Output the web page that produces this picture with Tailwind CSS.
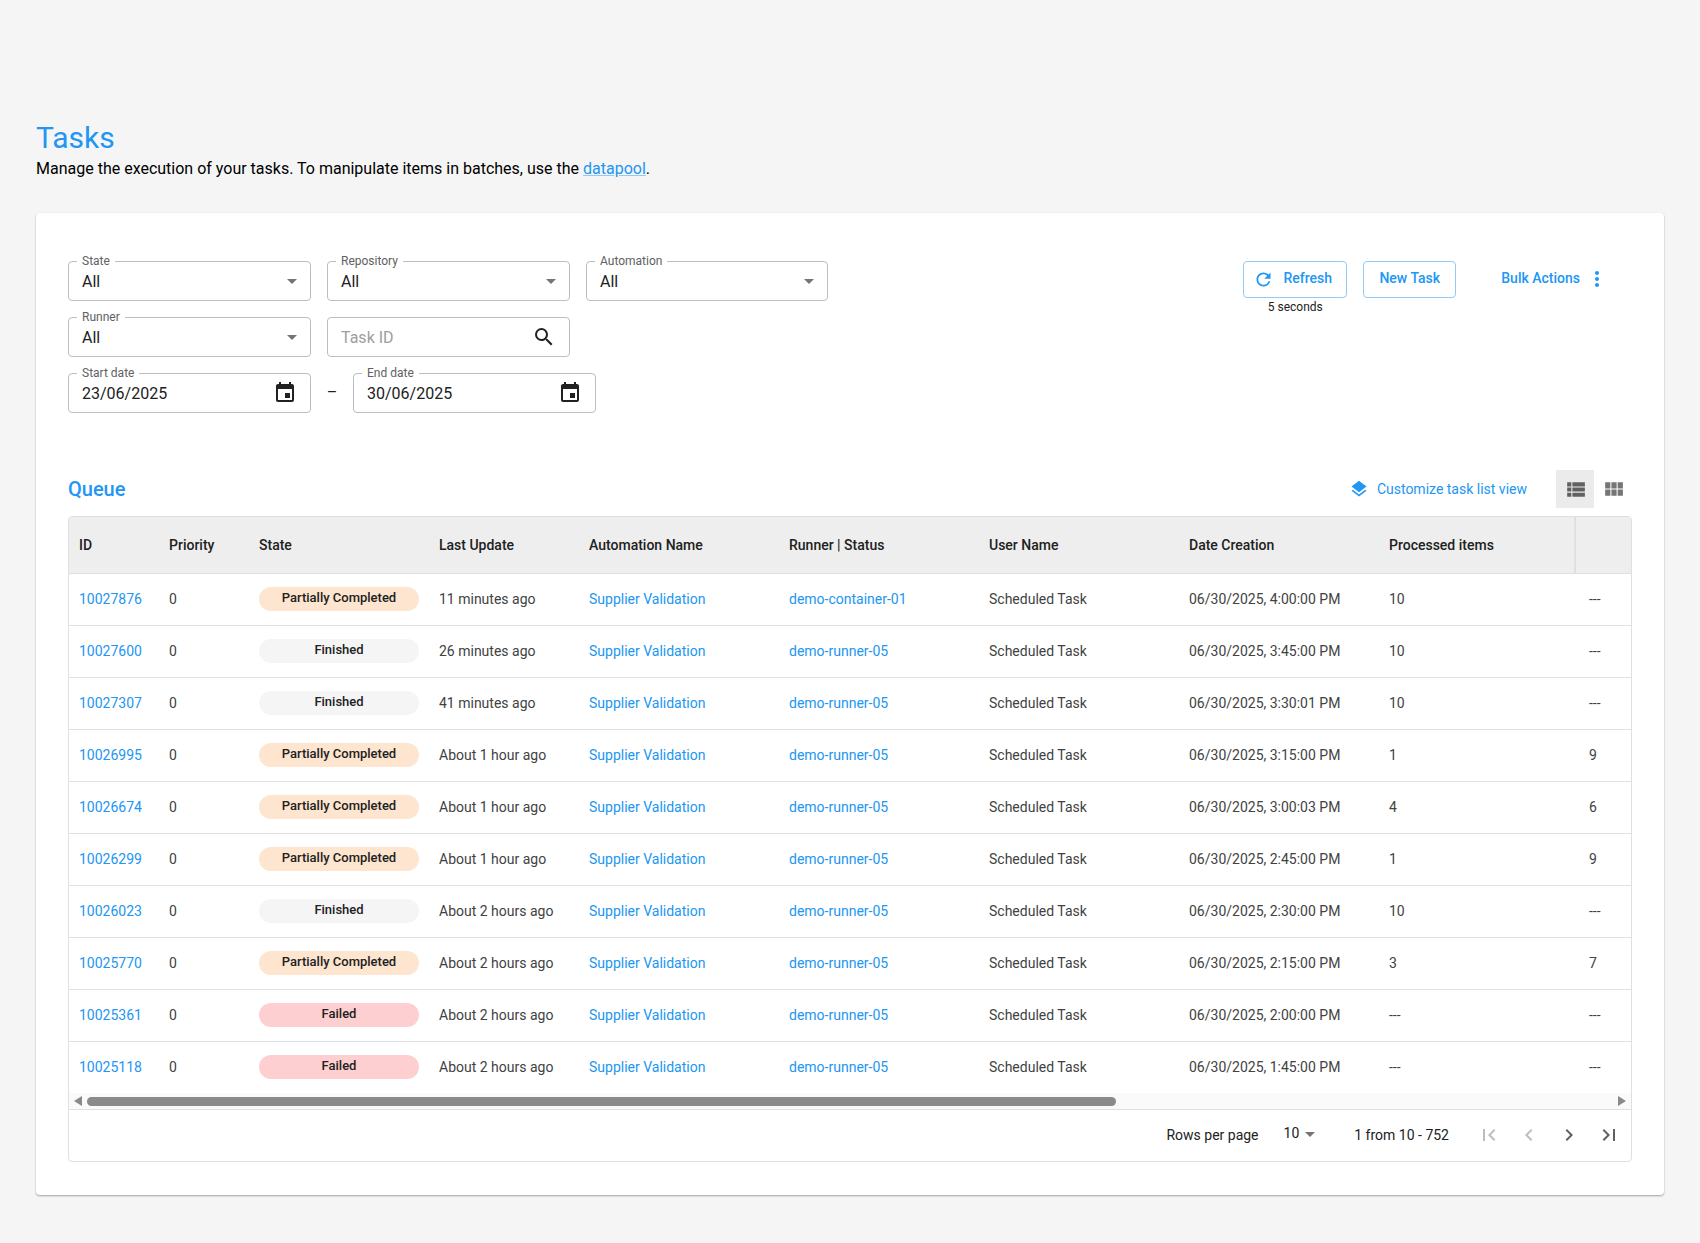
<!DOCTYPE html>
<html lang="en">
<head>
    <meta charset="UTF-8">
    <meta name="viewport" content="width=device-width, initial-scale=1.0">
    <script src="https://cdn.jsdelivr.net/npm/@tailwindcss/browser@4"></script>
    <title>Tasks</title>
</head>

<body class="bg-[#f5f5f5] font-['Roboto',sans-serif] h-[1243px] overflow-hidden">
    <main class="px-[36px] pt-[119px]">
        <h1 class="text-[30px] leading-[38px] font-normal text-[#2196f3]">Tasks</h1>
        <p class="text-base leading-[24px] text-black">Manage the execution of your tasks. To manipulate items in batches, use the <a href="#" class="text-[#2196f3] underline decoration-[#90caf9]">datapool</a>.</p>

        <section class="mt-[32px] h-[982px] bg-white rounded-[4px] shadow-[0_1px_2px_rgba(0,0,0,0.35)] px-[32px] pt-[48px]">
            <!-- filters -->
            <div class="flex justify-between h-[152px]">
                <div class="flex flex-col gap-[16px]">
                    <div class="flex gap-[16px]">
                        <div class="relative w-[243px] h-[40px] border border-[#bdbdbd] rounded-[4px] flex items-center justify-between pl-[13px] pr-[13px]">
                            <span class="absolute -top-[8px] left-[8px] bg-white px-[5px] text-xs leading-[14px] text-[#616161]">State</span>
                            <span class="mt-[2px] text-base text-[#212121]">All</span>
                            <span class="w-0 h-0 border-x-[5px] border-x-transparent border-t-[5px] border-t-[#757575]"></span>
                        </div>
                        <div class="relative w-[243px] h-[40px] border border-[#bdbdbd] rounded-[4px] flex items-center justify-between pl-[13px] pr-[13px]">
                            <span class="absolute -top-[8px] left-[8px] bg-white px-[5px] text-xs leading-[14px] text-[#616161]">Repository</span>
                            <span class="mt-[2px] text-base text-[#212121]">All</span>
                            <span class="w-0 h-0 border-x-[5px] border-x-transparent border-t-[5px] border-t-[#757575]"></span>
                        </div>
                        <div class="relative w-[242px] h-[40px] border border-[#bdbdbd] rounded-[4px] flex items-center justify-between pl-[13px] pr-[13px]">
                            <span class="absolute -top-[8px] left-[8px] bg-white px-[5px] text-xs leading-[14px] text-[#616161]">Automation</span>
                            <span class="mt-[2px] text-base text-[#212121]">All</span>
                            <span class="w-0 h-0 border-x-[5px] border-x-transparent border-t-[5px] border-t-[#757575]"></span>
                        </div>
                    </div>
                    <div class="flex gap-[16px]">
                        <div class="relative w-[243px] h-[40px] border border-[#bdbdbd] rounded-[4px] flex items-center justify-between pl-[13px] pr-[13px]">
                            <span class="absolute -top-[8px] left-[8px] bg-white px-[5px] text-xs leading-[14px] text-[#616161]">Runner</span>
                            <span class="mt-[2px] text-base text-[#212121]">All</span>
                            <span class="w-0 h-0 border-x-[5px] border-x-transparent border-t-[5px] border-t-[#757575]"></span>
                        </div>
                        <div class="w-[243px] h-[40px] border border-[#bdbdbd] rounded-[4px] flex items-center justify-between pl-[13px] pr-[13px]">
                            <span class="mt-[2px] text-base text-[#9e9e9e]">Task ID</span>
                            <svg class="w-[24px] h-[24px]" viewBox="0 0 24 24" fill="#212121"><path d="M15.5 14h-.79l-.28-.27A6.47 6.47 0 0 0 16 9.5 6.5 6.5 0 1 0 9.5 16c1.61 0 3.09-.59 4.23-1.57l.27.28v.79l5 4.99L20.49 19l-4.99-5zm-6 0C7.01 14 5 11.99 5 9.5S7.01 5 9.5 5 14 7.01 14 9.5 11.99 14 9.5 14z"/></svg>
                        </div>
                    </div>
                    <div class="flex items-center">
                        <div class="relative w-[243px] h-[40px] border border-[#bdbdbd] rounded-[4px] flex items-center justify-between pl-[13px] pr-[13px]">
                            <span class="absolute -top-[8px] left-[8px] bg-white px-[5px] text-xs leading-[14px] text-[#616161]">Start date</span>
                            <span class="mt-[2px] text-base text-[#212121]">23/06/2025</span>
                            <svg class="w-[24px] h-[24px]" viewBox="0 0 24 24" fill="#212121"><path d="M17 12h-5v5h5v-5zM16 1v2H8V1H6v2H5c-1.11 0-1.99.9-1.99 2L3 19c0 1.1.89 2 2 2h14c1.1 0 2-.9 2-2V5c0-1.1-.9-2-2-2h-1V1h-2zm3 18H5V8h14v11z"/></svg>
                        </div>
                        <span class="w-[42px] text-center text-base text-[#212121]">–</span>
                        <div class="relative w-[243px] h-[40px] border border-[#bdbdbd] rounded-[4px] flex items-center justify-between pl-[13px] pr-[13px]">
                            <span class="absolute -top-[8px] left-[8px] bg-white px-[5px] text-xs leading-[14px] text-[#616161]">End date</span>
                            <span class="mt-[2px] text-base text-[#212121]">30/06/2025</span>
                            <svg class="w-[24px] h-[24px]" viewBox="0 0 24 24" fill="#212121"><path d="M17 12h-5v5h5v-5zM16 1v2H8V1H6v2H5c-1.11 0-1.99.9-1.99 2L3 19c0 1.1.89 2 2 2h14c1.1 0 2-.9 2-2V5c0-1.1-.9-2-2-2h-1V1h-2zm3 18H5V8h14v11z"/></svg>
                        </div>
                    </div>
                </div>
                <div class="flex items-start">
                    <div class="flex flex-col items-center">
                        <button class="w-[104px] h-[37px] border border-[#90caf9] rounded-[4px] flex items-center justify-center gap-[9px] pb-[3px] pr-[5px] text-sm font-medium text-[#2196f3]">
                            <svg class="w-[21px] h-[21px] mt-[3px]" viewBox="0 0 24 24" fill="#2196f3"><path d="M17.65 6.35A7.958 7.958 0 0 0 12 4c-4.42 0-7.99 3.58-7.99 8s3.57 8 7.99 8c3.73 0 6.84-2.55 7.73-6h-2.08A5.99 5.99 0 0 1 12 18c-3.31 0-6-2.69-6-6s2.69-6 6-6c1.66 0 3.14.69 4.22 1.78L13 11h7V4l-2.35 2.35z"/></svg>
                            Refresh
                        </button>
                        <span class="text-xs leading-[18px] text-[#212121]">5 seconds</span>
                    </div>
                    <button class="ml-[16px] w-[93px] h-[37px] border border-[#90caf9] rounded-[4px] pb-[3px] text-sm font-medium text-[#2196f3]">New Task</button>
                    <div class="ml-[45px] h-[37px] flex items-center pb-[3px] text-sm font-medium text-[#2196f3]">
                        Bulk Actions
                        <svg class="ml-[5px] mr-[23px] w-[24px] h-[24px] mt-[2px]" viewBox="0 0 24 24" fill="#2196f3"><path d="M12 8c1.1 0 2-.9 2-2s-.9-2-2-2-2 .9-2 2 .9 2 2 2zm0 2c-1.1 0-2 .9-2 2s.9 2 2 2 2-.9 2-2-.9-2-2-2zm0 6c-1.1 0-2 .9-2 2s.9 2 2 2 2-.9 2-2-.9-2-2-2z"/></svg>
                    </div>
                </div>
            </div>

            <!-- queue header -->
            <div class="mt-[57px] mb-[8px] h-[38px] flex items-center justify-between">
                <h2 class="text-xl font-medium text-[#2196f3]">Queue</h2>
                <div class="flex items-center">
                    <svg class="w-[20px] h-[20px]" viewBox="0 0 24 24" fill="#2196f3"><path d="M11.99 18.54l-7.37-5.73L3 14.07l9 7 9-7-1.63-1.27-7.38 5.74zM12 16l7.36-5.73L21 9l-9-7-9 7 1.63 1.27L12 16z"/></svg>
                    <span class="ml-[8px] mr-[29px] text-sm text-[#2196f3]">Customize task list view</span>
                    <div class="w-[38px] h-[38px] bg-[#ebebeb] flex items-center justify-center">
                        <svg class="w-[25px] h-[25px]" viewBox="0 0 24 24" fill="#616161"><path d="M4 14h4v-4H4v4zm0 5h4v-4H4v4zM4 9h4V5H4v4zm5 5h12v-4H9v4zm0 5h12v-4H9v4zM9 5v4h12V5H9z"/></svg>
                    </div>
                    <div class="w-[38px] h-[38px] flex items-center justify-center">
                        <svg class="w-[25px] h-[25px]" viewBox="0 0 24 24" fill="#757575"><path d="M4 11h5V5H4v6zm0 7h5v-6H4v6zm6 0h5v-6h-5v6zm6 0h5v-6h-5v6zm-6-7h5V5h-5v6zm6-6v6h5V5h-5z"/></svg>
                    </div>
                </div>
            </div>

            <!-- table -->
            <div class="border border-[#e0e0e0] rounded-[4px] overflow-hidden">
                <table class="w-full table-fixed text-sm text-[#424242]">
                    <colgroup>
                        <col class="w-[90px]"><col class="w-[90px]"><col class="w-[180px]"><col class="w-[150px]"><col class="w-[200px]"><col class="w-[200px]"><col class="w-[200px]"><col class="w-[200px]"><col class="w-[196px]"><col>
                    </colgroup>
                    <thead class="bg-[#eeeeee] text-[#212121] font-medium text-left">
                        <tr class="h-[56px] border-b border-[#e0e0e0]">
                            <th class="font-medium pl-[10px]">ID</th>
                            <th class="font-medium pl-[10px]">Priority</th>
                            <th class="font-medium pl-[10px]">State</th>
                            <th class="font-medium pl-[10px]">Last Update</th>
                            <th class="font-medium pl-[10px]">Automation Name</th>
                            <th class="font-medium pl-[10px]">Runner | Status</th>
                            <th class="font-medium pl-[10px]">User Name</th>
                            <th class="font-medium pl-[10px]">Date Creation</th>
                            <th class="font-medium pl-[10px]">Processed items</th>
                            <th class="border-l-2 border-[#e0e0e0]"></th>
                        </tr>
                    </thead>
                    <tbody>
                        <tr class="h-[52px] border-b border-[#e0e0e0]">
                            <td class="pl-[10px]"><a class="text-[#2196f3]" href="#">10027876</a></td><td class="pl-[10px]">0</td>
                            <td class="pl-[10px]"><div class="w-[160px] h-[24px] rounded-full bg-[#fde5cf] text-[13px] font-medium text-[#212121] text-center leading-[22px]">Partially Completed</div></td>
                            <td class="pl-[10px]">11 minutes ago</td><td class="pl-[10px]"><a class="text-[#2196f3]" href="#">Supplier Validation</a></td><td class="pl-[10px]"><a class="text-[#2196f3]" href="#">demo-container-01</a></td><td class="pl-[10px]">Scheduled Task</td><td class="pl-[10px]">06/30/2025, 4:00:00 PM</td><td class="pl-[10px]">10</td><td class="pl-[14px]">---</td>
                        </tr>
                        <tr class="h-[52px] border-b border-[#e0e0e0]">
                            <td class="pl-[10px]"><a class="text-[#2196f3]" href="#">10027600</a></td><td class="pl-[10px]">0</td>
                            <td class="pl-[10px]"><div class="w-[160px] h-[24px] rounded-full bg-[#f5f5f5] text-[13px] font-medium text-[#212121] text-center leading-[22px]">Finished</div></td>
                            <td class="pl-[10px]">26 minutes ago</td><td class="pl-[10px]"><a class="text-[#2196f3]" href="#">Supplier Validation</a></td><td class="pl-[10px]"><a class="text-[#2196f3]" href="#">demo-runner-05</a></td><td class="pl-[10px]">Scheduled Task</td><td class="pl-[10px]">06/30/2025, 3:45:00 PM</td><td class="pl-[10px]">10</td><td class="pl-[14px]">---</td>
                        </tr>
                        <tr class="h-[52px] border-b border-[#e0e0e0]">
                            <td class="pl-[10px]"><a class="text-[#2196f3]" href="#">10027307</a></td><td class="pl-[10px]">0</td>
                            <td class="pl-[10px]"><div class="w-[160px] h-[24px] rounded-full bg-[#f5f5f5] text-[13px] font-medium text-[#212121] text-center leading-[22px]">Finished</div></td>
                            <td class="pl-[10px]">41 minutes ago</td><td class="pl-[10px]"><a class="text-[#2196f3]" href="#">Supplier Validation</a></td><td class="pl-[10px]"><a class="text-[#2196f3]" href="#">demo-runner-05</a></td><td class="pl-[10px]">Scheduled Task</td><td class="pl-[10px]">06/30/2025, 3:30:01 PM</td><td class="pl-[10px]">10</td><td class="pl-[14px]">---</td>
                        </tr>
                        <tr class="h-[52px] border-b border-[#e0e0e0]">
                            <td class="pl-[10px]"><a class="text-[#2196f3]" href="#">10026995</a></td><td class="pl-[10px]">0</td>
                            <td class="pl-[10px]"><div class="w-[160px] h-[24px] rounded-full bg-[#fde5cf] text-[13px] font-medium text-[#212121] text-center leading-[22px]">Partially Completed</div></td>
                            <td class="pl-[10px]">About 1 hour ago</td><td class="pl-[10px]"><a class="text-[#2196f3]" href="#">Supplier Validation</a></td><td class="pl-[10px]"><a class="text-[#2196f3]" href="#">demo-runner-05</a></td><td class="pl-[10px]">Scheduled Task</td><td class="pl-[10px]">06/30/2025, 3:15:00 PM</td><td class="pl-[10px]">1</td><td class="pl-[14px]">9</td>
                        </tr>
                        <tr class="h-[52px] border-b border-[#e0e0e0]">
                            <td class="pl-[10px]"><a class="text-[#2196f3]" href="#">10026674</a></td><td class="pl-[10px]">0</td>
                            <td class="pl-[10px]"><div class="w-[160px] h-[24px] rounded-full bg-[#fde5cf] text-[13px] font-medium text-[#212121] text-center leading-[22px]">Partially Completed</div></td>
                            <td class="pl-[10px]">About 1 hour ago</td><td class="pl-[10px]"><a class="text-[#2196f3]" href="#">Supplier Validation</a></td><td class="pl-[10px]"><a class="text-[#2196f3]" href="#">demo-runner-05</a></td><td class="pl-[10px]">Scheduled Task</td><td class="pl-[10px]">06/30/2025, 3:00:03 PM</td><td class="pl-[10px]">4</td><td class="pl-[14px]">6</td>
                        </tr>
                        <tr class="h-[52px] border-b border-[#e0e0e0]">
                            <td class="pl-[10px]"><a class="text-[#2196f3]" href="#">10026299</a></td><td class="pl-[10px]">0</td>
                            <td class="pl-[10px]"><div class="w-[160px] h-[24px] rounded-full bg-[#fde5cf] text-[13px] font-medium text-[#212121] text-center leading-[22px]">Partially Completed</div></td>
                            <td class="pl-[10px]">About 1 hour ago</td><td class="pl-[10px]"><a class="text-[#2196f3]" href="#">Supplier Validation</a></td><td class="pl-[10px]"><a class="text-[#2196f3]" href="#">demo-runner-05</a></td><td class="pl-[10px]">Scheduled Task</td><td class="pl-[10px]">06/30/2025, 2:45:00 PM</td><td class="pl-[10px]">1</td><td class="pl-[14px]">9</td>
                        </tr>
                        <tr class="h-[52px] border-b border-[#e0e0e0]">
                            <td class="pl-[10px]"><a class="text-[#2196f3]" href="#">10026023</a></td><td class="pl-[10px]">0</td>
                            <td class="pl-[10px]"><div class="w-[160px] h-[24px] rounded-full bg-[#f5f5f5] text-[13px] font-medium text-[#212121] text-center leading-[22px]">Finished</div></td>
                            <td class="pl-[10px]">About 2 hours ago</td><td class="pl-[10px]"><a class="text-[#2196f3]" href="#">Supplier Validation</a></td><td class="pl-[10px]"><a class="text-[#2196f3]" href="#">demo-runner-05</a></td><td class="pl-[10px]">Scheduled Task</td><td class="pl-[10px]">06/30/2025, 2:30:00 PM</td><td class="pl-[10px]">10</td><td class="pl-[14px]">---</td>
                        </tr>
                        <tr class="h-[52px] border-b border-[#e0e0e0]">
                            <td class="pl-[10px]"><a class="text-[#2196f3]" href="#">10025770</a></td><td class="pl-[10px]">0</td>
                            <td class="pl-[10px]"><div class="w-[160px] h-[24px] rounded-full bg-[#fde5cf] text-[13px] font-medium text-[#212121] text-center leading-[22px]">Partially Completed</div></td>
                            <td class="pl-[10px]">About 2 hours ago</td><td class="pl-[10px]"><a class="text-[#2196f3]" href="#">Supplier Validation</a></td><td class="pl-[10px]"><a class="text-[#2196f3]" href="#">demo-runner-05</a></td><td class="pl-[10px]">Scheduled Task</td><td class="pl-[10px]">06/30/2025, 2:15:00 PM</td><td class="pl-[10px]">3</td><td class="pl-[14px]">7</td>
                        </tr>
                        <tr class="h-[52px] border-b border-[#e0e0e0]">
                            <td class="pl-[10px]"><a class="text-[#2196f3]" href="#">10025361</a></td><td class="pl-[10px]">0</td>
                            <td class="pl-[10px]"><div class="w-[160px] h-[24px] rounded-full bg-[#fecfd0] text-[13px] font-medium text-[#212121] text-center leading-[22px]">Failed</div></td>
                            <td class="pl-[10px]">About 2 hours ago</td><td class="pl-[10px]"><a class="text-[#2196f3]" href="#">Supplier Validation</a></td><td class="pl-[10px]"><a class="text-[#2196f3]" href="#">demo-runner-05</a></td><td class="pl-[10px]">Scheduled Task</td><td class="pl-[10px]">06/30/2025, 2:00:00 PM</td><td class="pl-[10px]">---</td><td class="pl-[14px]">---</td>
                        </tr>
                        <tr class="h-[52px]">
                            <td class="pl-[10px]"><a class="text-[#2196f3]" href="#">10025118</a></td><td class="pl-[10px]">0</td>
                            <td class="pl-[10px]"><div class="w-[160px] h-[24px] rounded-full bg-[#fecfd0] text-[13px] font-medium text-[#212121] text-center leading-[22px]">Failed</div></td>
                            <td class="pl-[10px]">About 2 hours ago</td><td class="pl-[10px]"><a class="text-[#2196f3]" href="#">Supplier Validation</a></td><td class="pl-[10px]"><a class="text-[#2196f3]" href="#">demo-runner-05</a></td><td class="pl-[10px]">Scheduled Task</td><td class="pl-[10px]">06/30/2025, 1:45:00 PM</td><td class="pl-[10px]">---</td><td class="pl-[14px]">---</td>
                        </tr>
                    </tbody>
                </table>

                <!-- scrollbar -->
                <div class="h-[16px] bg-[#fafafa] flex items-center pl-[5px] pr-[5px]">
                    <span class="w-0 h-0 border-y-[5px] border-y-transparent border-r-[8px] border-r-[#8a8a8a]"></span>
                    <span class="ml-[5px] w-[1029px] h-[9px] rounded-full bg-[#8a8a8a]"></span>
                    <span class="ml-auto w-0 h-0 border-y-[5px] border-y-transparent border-l-[8px] border-l-[#8a8a8a]"></span>
                </div>

                <!-- pagination -->
                <div class="h-[52px] border-t border-[#e0e0e0] flex items-center justify-end pb-[2px] text-sm text-[#212121] pr-[10px]">
                    <span>Rows per page</span>
                    <span class="ml-[25px] -mt-[4px]">10</span>
                    <span class="ml-[6px] w-0 h-0 border-x-[5px] border-x-transparent border-t-[5px] border-t-[#757575]"></span>
                    <span class="ml-[39px]">1 from 10 - 752</span>
                    <div class="ml-[28px] flex gap-[16px]">
                        <svg class="w-[24px] h-[24px]" viewBox="0 0 24 24" fill="#bdbdbd"><path d="M18.41 16.59L13.82 12l4.59-4.59L17 6l-6 6 6 6zM6 6h2v12H6z"/></svg>
                        <svg class="w-[24px] h-[24px]" viewBox="0 0 24 24" fill="#bdbdbd"><path d="M15.41 7.41L14 6l-6 6 6 6 1.41-1.41L10.83 12z"/></svg>
                        <svg class="w-[24px] h-[24px]" viewBox="0 0 24 24" fill="#616161"><path d="M10 6L8.59 7.41 13.17 12l-4.58 4.59L10 18l6-6z"/></svg>
                        <svg class="w-[24px] h-[24px]" viewBox="0 0 24 24" fill="#616161"><path d="M5.59 7.41L10.18 12l-4.59 4.59L7 18l6-6-6-6zM16 6h2v12h-2z"/></svg>
                    </div>
                </div>
            </div>
        </section>
    </main>
</body>
</html>
